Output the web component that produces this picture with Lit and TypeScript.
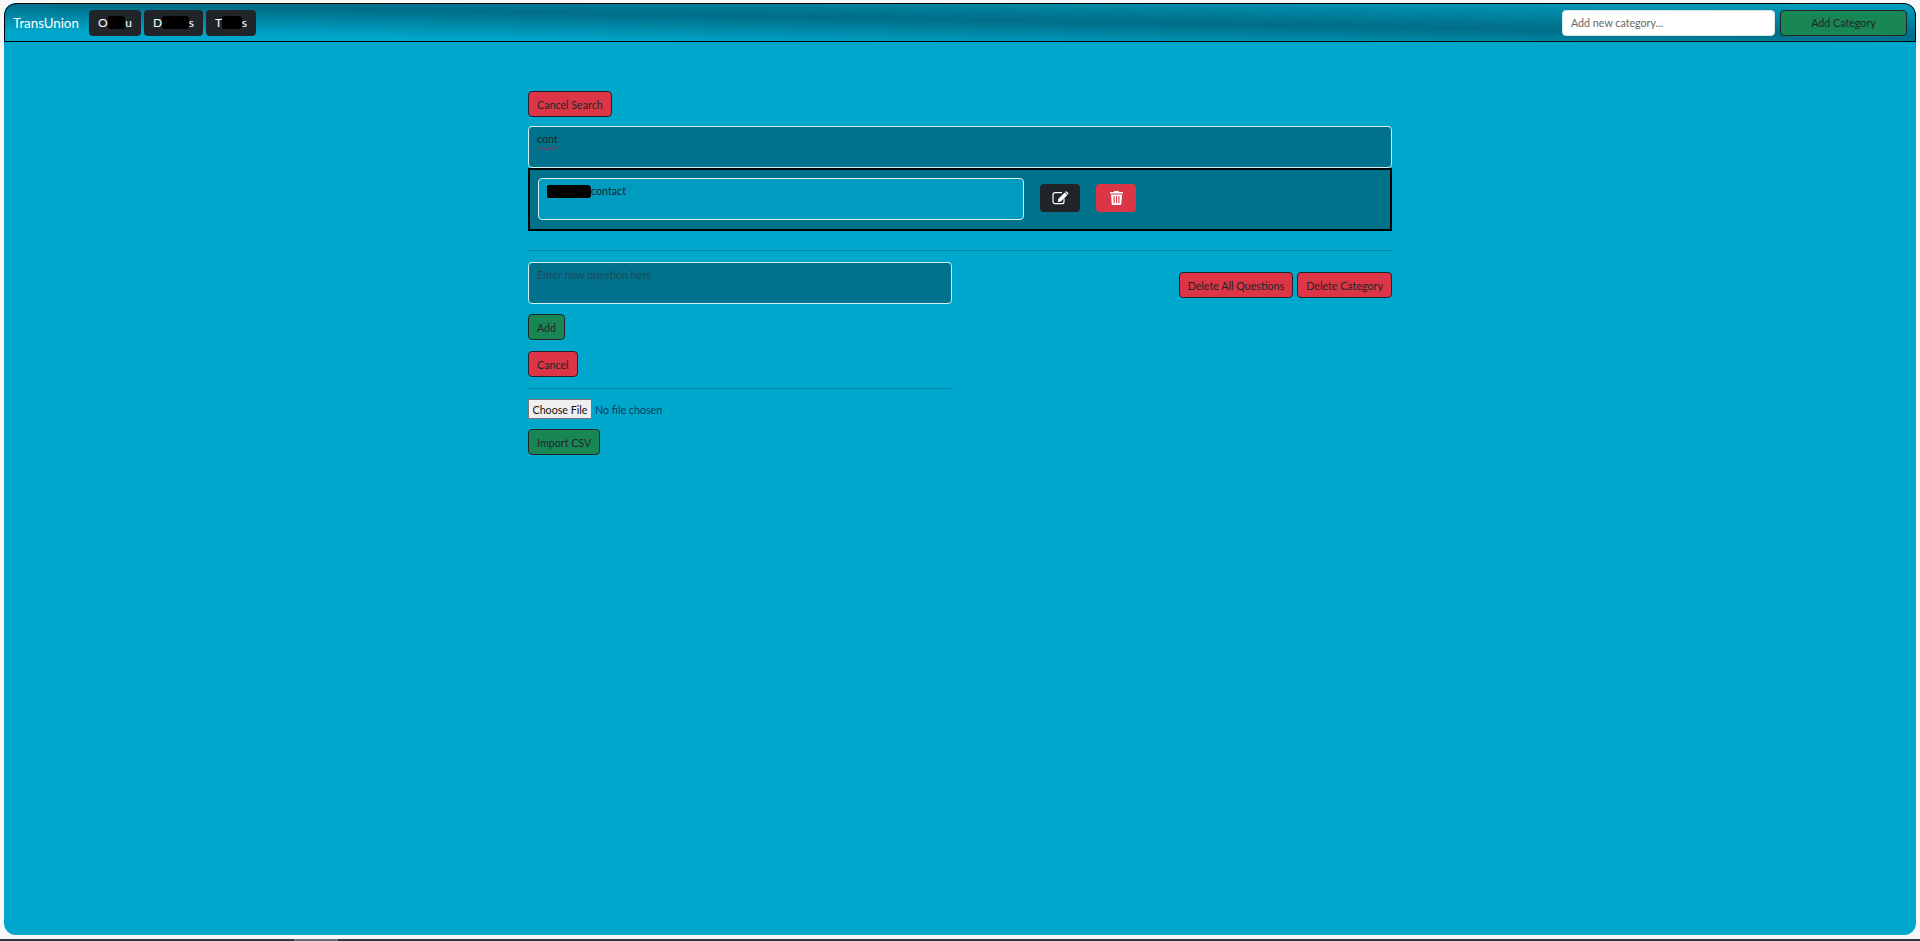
import { html, css, LitElement, svg } from 'lit';
import { customElement } from 'lit/decorators.js';

const editIcon = svg`<svg class="ico" width="17" height="14" viewBox="0 0 17 14">
  <path d="M12 7.5v3.2A2 2 0 0 1 10 12.7H3A2 2 0 0 1 1 10.7V3.7a2 2 0 0 1 2-2h7" fill="none" stroke="#fff" stroke-width="1.2"/>
  <path d="M6.2 8 12.8 1.4 15.4 4 8.8 10.6 5.8 11.1Z" fill="#fff"/>
  <path d="M13.6.6a.8.8 0 0 1 1.1 0l1.5 1.5a.8.8 0 0 1 0 1.1l-.4.4L13.2 1Z" fill="#fff"/>
</svg>`;

const trashIcon = svg`<svg class="ico" width="13" height="14" viewBox="0 0 13 14">
  <path fill="#fff" fill-rule="evenodd" d="M4.4 0h4.2l.6 1.1H13v1.5H0V1.1h3.8ZM1 3.6h11l-.7 9.3a1.2 1.2 0 0 1-1.2 1.1H2.9a1.2 1.2 0 0 1-1.2-1.1ZM3.6 5.2v7h1.1v-7Zm2.4 0v7h1.1v-7Zm2.4 0v7h1.1v-7Z"/>
</svg>`;

@customElement('app-root')
export class AppRoot extends LitElement {
  static styles = css`
    :host {
      display: block;
      height: 941px;
      overflow: hidden;
      background: #f7f7f7;
      font-family: Lato, 'Liberation Sans', sans-serif;
      font-size: 10.7px;
    }

    * {
      box-sizing: border-box;
    }

    .page {
      margin: 3px 4px 0;
      height: 932px;
      border-radius: 12px;
      background: #00a7cc;
      overflow: hidden;
    }

    .navbar {
      height: 39px;
      display: flex;
      align-items: center;
      padding: 0 8px;
      border: 1px solid #000;
      border-radius: 12px 12px 0 0;
      background: linear-gradient(181deg, #00a0c2 0%, #00708a 43%, #00708a 48%, #00a5ca 85%, #00a7cc 100%);
    }

    .brand {
      color: #fff;
      font-size: 13.3px;
      width: 76px;
    }

    .nav-btn {
      height: 26px;
      display: inline-flex;
      align-items: center;
      justify-content: space-between;
      margin-right: 3px;
      padding: 0 9px;
      border-radius: 4px;
      background: #212529;
      color: #fff;
      font-size: 12px;
      white-space: nowrap;
    }

    .w52 {
      width: 52px;
    }

    .w59 {
      width: 59px;
    }

    .w50 {
      width: 50px;
    }

    .mask {
      display: inline-block;
      height: 13px;
      border-radius: 2px 4px 3px 2px;
      background: #000;
      vertical-align: -3px;
    }

    .m18 {
      width: 18px;
    }

    .m30 {
      width: 30px;
    }

    .m22 {
      width: 22px;
    }

    .m44 {
      width: 44px;
    }

    .spacer {
      flex: 1;
    }

    .cat-input {
      width: 213px;
      height: 26px;
      padding: 0 8px;
      border: 1px solid #d7e6ea;
      border-radius: 4px;
      background: #fff;
      font: inherit;
    }

    .cat-input::placeholder {
      color: #666;
    }

    .btn {
      height: 26px;
      display: inline-flex;
      align-items: center;
      justify-content: center;
      padding: 0 8px;
      border: 1px solid #212529;
      border-radius: 4px;
      color: #212529;
      font: inherit;
      white-space: nowrap;
    }

    .green {
      background: #198754;
    }

    .red {
      background: #dc3545;
    }

    .add-cat {
      width: 127px;
      margin-left: 5px;
    }

    .main {
      width: 864px;
      margin: 49px auto 0;
      display: flex;
      flex-direction: column;
    }

    .row {
      display: flex;
    }

    .box {
      border: 1px solid #d5eef3;
      border-radius: 4px;
      padding: 5px 8px;
      height: 42px;
      color: #212529;
      font: inherit;
    }

    .dark {
      background: #00728c;
    }

    .search {
      margin-top: 9px;
    }

    .squiggle {
      text-decoration: underline wavy #c0283a 1px;
      text-decoration-skip-ink: none;
      text-underline-offset: 3px;
    }

    .result {
      height: 63px;
      display: flex;
      align-items: center;
      padding: 0 8px 1px;
      border: 2px solid #000;
      background: #00728c;
    }

    .result .box {
      width: 486px;
      background: #009cc0;
    }

    .icon-btn {
      width: 40px;
      height: 28px;
      display: flex;
      align-items: center;
      justify-content: center;
      margin: 0 0 3px 16px;
      border: 0;
      border-radius: 4px;
    }

    .black {
      background: #212529;
    }

    hr {
      margin: 0;
      border: 0;
      height: 1px;
      background: #0083a0;
    }

    .divider {
      margin-top: 19px;
    }

    .lower {
      margin-top: 11px;
      display: flex;
      justify-content: space-between;
      align-items: flex-start;
    }

    .left {
      width: 424px;
      display: flex;
      flex-direction: column;
      align-items: flex-start;
    }

    .left textarea {
      width: 100%;
      resize: none;
      outline: none;
      display: block;
    }

    .left textarea::placeholder {
      color: #1f4a5a;
      opacity: 1;
    }

    .left .btn {
      margin-top: 10px;
    }

    .left .btn + .btn {
      margin-top: 11px;
    }

    .left hr {
      width: 100%;
      margin-top: 11px;
    }

    .file {
      margin-top: 10px;
      height: 20px;
      color: #0b3a5e;
      font: inherit;
    }

    .file::file-selector-button {
      width: 64px;
      height: 20px;
      font: inherit;
      color: #111;
      margin-right: 3px;
      padding: 0;
      border: 1px solid #767676;
      border-radius: 0;
      background: #efefef;
    }

    .right {
      display: flex;
      gap: 4px;
      margin-top: 10px;
    }

    .strip {
      margin-top: 4px;
      height: 2px;
      background: linear-gradient(
        90deg,
        #283a44 0,
        #283a44 294px,
        #5f6d75 294px,
        #5f6d75 338px,
        #283a44 338px
      );
    }
  `;

  render() {
    return html`
      <div class="page">
        <nav class="navbar">
          <span class="brand">TransUnion</span>
          <span class="nav-btn w52">O<i class="mask m18"></i>u</span>
          <span class="nav-btn w59">D<i class="mask m30"></i>s</span>
          <span class="nav-btn w50">T<i class="mask m22"></i>s</span>
          <span class="spacer"></span>
          <input class="cat-input" placeholder="Add new category..." />
          <button class="btn green add-cat">Add Category</button>
        </nav>
        <div class="main">
          <div class="row"><button class="btn red">Cancel Search</button></div>
          <div class="box dark search"><span class="squiggle">cont</span></div>
          <div class="result">
            <div class="box"><i class="mask m44"></i>contact</div>
            <button class="icon-btn black">${editIcon}</button>
            <button class="icon-btn red">${trashIcon}</button>
          </div>
          <hr class="divider" />
          <div class="lower">
            <div class="left">
              <textarea class="box dark" placeholder="Enter new question here"></textarea>
              <button class="btn green">Add</button>
              <button class="btn red">Cancel</button>
              <hr />
              <input class="file" type="file" />
              <button class="btn green">Import CSV</button>
            </div>
            <div class="right">
              <button class="btn red">Delete All Questions</button>
              <button class="btn red">Delete Category</button>
            </div>
          </div>
        </div>
      </div>
      <div class="strip"></div>
    `;
  }
}
